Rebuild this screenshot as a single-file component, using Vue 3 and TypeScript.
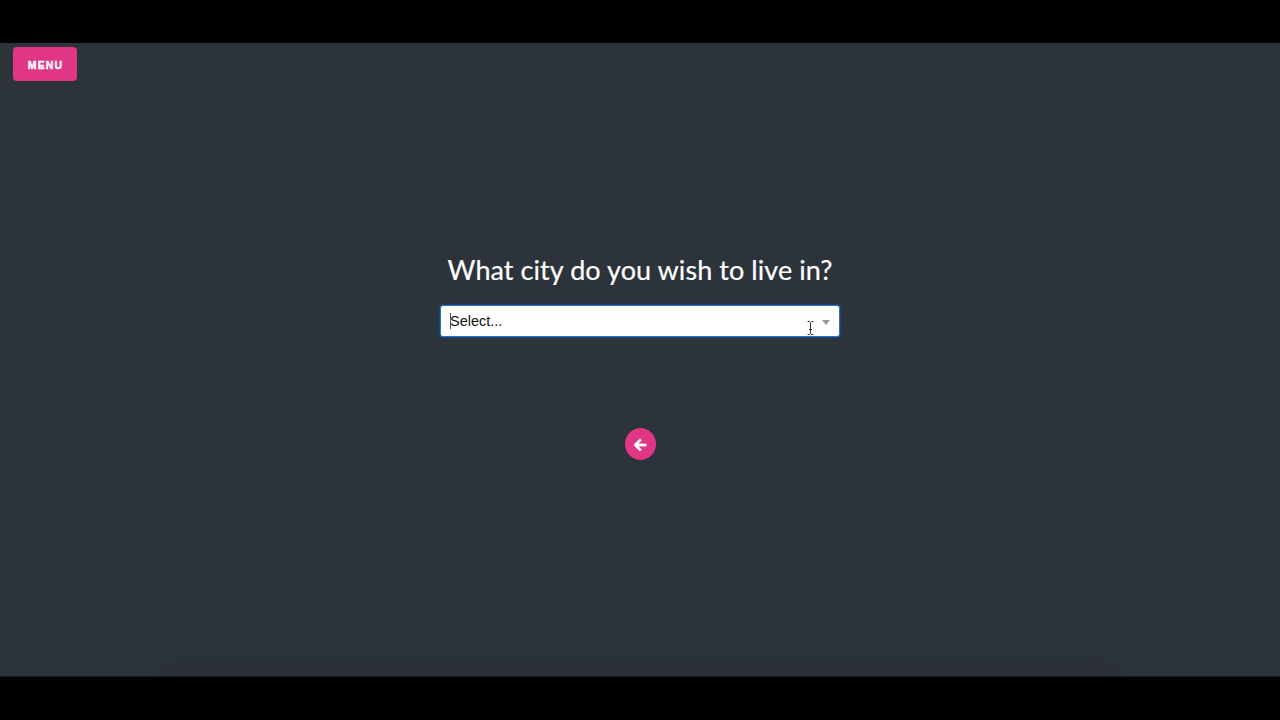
<script setup lang="ts">
import { onMounted, ref, useTemplateRef } from "vue";

const question = "What city do you wish to live in?";
const placeholder = "Select...";
const focused = ref(true);
const select = useTemplateRef("select");

onMounted(() => {
  select.value?.focus();
});
</script>

<template>
  <div class="screen">
    <main class="page">
      <header>
        <button class="menu" type="button">MENU</button>
      </header>
      <section class="question">
        <h1>{{ question }}</h1>
        <div ref="select" class="select" tabindex="0" role="combobox">
          <span v-if="focused" class="caret"></span>
          <span class="placeholder">{{ placeholder }}</span>
          <span class="arrow"></span>
          <svg class="cursor" viewBox="0 0 7 14" fill="none" stroke="#333" stroke-width="1">
            <path d="M0.5 0.5H2.5L3.5 1.5L4.5 0.5H6.5M3.5 1.5V12.5M0.5 13.5H2.5L3.5 12.5L4.5 13.5H6.5M2 8.5H5" />
          </svg>
        </div>
        <button class="back" type="button" aria-label="Back">
          <svg viewBox="0 0 448 512" fill="currentColor" stroke="currentColor" stroke-width="26">
            <path
              d="M257.5 445.1l-22.2 22.2c-9.4 9.4-24.6 9.4-33.9 0L7 273c-9.4-9.4-9.4-24.6 0-33.9L201.4 44.7c9.4-9.4 24.6-9.4 33.9 0l22.2 22.2c9.5 9.5 9.3 25-.4 34.3L136.6 216H424c13.3 0 24 10.7 24 24v32c0 13.3-10.7 24-24 24H136.6l120.5 114.8c9.8 9.3 10 24.8.4 34.3z"
            />
          </svg>
        </button>
      </section>
    </main>
  </div>
</template>

<style>
body {
  margin: 0;
  background: #000;
}
</style>

<style scoped>
.screen {
  box-sizing: border-box;
  height: 720px;
  padding: 43px 0;
  background: #000;
  overflow: hidden;
}
.page {
  position: relative;
  box-sizing: border-box;
  height: 634px;
  background: #2d333b;
  border-bottom: 1px solid #17191c;
  overflow: hidden;
}
/* Soft shadow rising from the bottom edge */
.page::after {
  content: "";
  position: absolute;
  top: 100%;
  left: 165px;
  width: 950px;
  height: 20px;
  box-shadow: 0 0 24px rgba(38, 38, 38, 0.6);
}
header {
  display: flex;
  padding: 4px 13px 0;
}
button {
  padding: 0;
  border: none;
  background: #e13685;
  color: #fff;
}
.menu {
  width: 64px;
  height: 34px;
  padding-left: 1px;
  border-radius: 4px;
  font: bold 10.5px/36px "Liberation Sans", Arial, sans-serif;
  letter-spacing: 1.1px;
  -webkit-text-stroke: 0.4px #fff;
}
.question {
  display: flex;
  flex-direction: column;
  align-items: center;
  padding-top: 171px;
}
h1 {
  margin: 0 0 18px;
  color: #fff;
  font: 400 27px/35px Lato, sans-serif;
  letter-spacing: 0.07px;
  white-space: nowrap;
  -webkit-text-stroke: 0.2px #fff;
}
.select {
  position: relative;
  box-sizing: border-box;
  display: flex;
  align-items: center;
  width: 400px;
  height: 32px;
  padding: 0 9px;
  border: 1px solid #2672c4;
  border-radius: 3px;
  outline: none;
  background: #fff;
  box-shadow: 0 0 3px rgba(0, 106, 220, 0.75);
}
.caret {
  width: 1px;
  height: 16px;
  margin-right: -1px;
  background: #555;
}
.placeholder {
  color: #111;
  font: 14.5px/30px "Liberation Sans", Arial, sans-serif;
}
.arrow {
  margin: 2px 0 0 auto;
  border: 4.5px solid transparent;
  border-top: 5px solid #999;
  border-bottom: none;
}
/* Text pointer hovering over the field */
.cursor {
  position: absolute;
  top: 15px;
  left: 365.5px;
  width: 7px;
  height: 14px;
}
.back {
  display: flex;
  align-items: center;
  justify-content: center;
  width: 31px;
  height: 32px;
  margin-top: 91px;
  border-radius: 50%;
}
.back svg {
  width: 12.25px;
  height: 14px;
  margin-top: 1px;
  overflow: visible;
}
</style>
